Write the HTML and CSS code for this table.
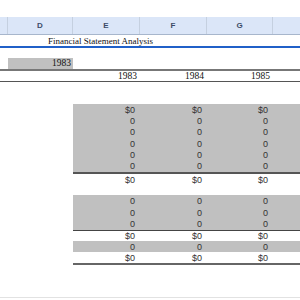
FILE: index.html
```html
<!DOCTYPE html>
<html>
<head>
<meta charset="utf-8">
<link rel="stylesheet" href="styles.css">
</head>
<body>
<div class="sheet">
  <div class="topgap"></div>
  <div class="cols colhead">
    <div class="hc"></div><div class="hc">D</div><div class="hc">E</div><div class="hc">F</div><div class="hc">G</div><div class="hc last"></div>
  </div>
  <div class="title"><span class="title-text">Financial Statement Analysis</span></div>
  <div class="gap10"></div>
  <div class="cols yr1">
    <div></div><div class="yearbox">1983</div>
  </div>
  <div class="cols years">
    <div></div><div></div><div class="yr">1983</div><div class="yr">1984</div><div class="yr">1985</div><div></div>
  </div>
  <div class="gap22"></div>
  <div class="data">
    <div class="block b1">
      <div class="drow"><div class="num">$0</div><div class="num">$0</div><div class="num">$0</div></div>
      <div class="drow"><div class="num">0</div><div class="num">0</div><div class="num">0</div></div>
      <div class="drow"><div class="num">0</div><div class="num">0</div><div class="num">0</div></div>
      <div class="drow"><div class="num">0</div><div class="num">0</div><div class="num">0</div></div>
      <div class="drow"><div class="num">0</div><div class="num">0</div><div class="num">0</div></div>
      <div class="drow"><div class="num">0</div><div class="num">0</div><div class="num">0</div></div>
    </div>
    <div class="drow total"><div class="num">$0</div><div class="num">$0</div><div class="num">$0</div></div>
    <div class="gap10"></div>
    <div class="block b2">
      <div class="drow"><div class="num">0</div><div class="num">0</div><div class="num">0</div></div>
      <div class="drow"><div class="num">0</div><div class="num">0</div><div class="num">0</div></div>
      <div class="drow"><div class="num">0</div><div class="num">0</div><div class="num">0</div></div>
    </div>
    <div class="drow sub"><div class="num">$0</div><div class="num">$0</div><div class="num">$0</div></div>
    <div class="drow shade one"><div class="num">0</div><div class="num">0</div><div class="num">0</div></div>
    <div class="drow final"><div class="num">$0</div><div class="num">$0</div><div class="num">$0</div></div>
  </div>
  <div class="bottomline"></div>
</div>
</body>
</html>
```
FILE: styles.css
```css
html, body {
  margin: 0;
  padding: 0;
  background: #ffffff;
}
.sheet {
  width: 300px;
  height: 300px;
  overflow: hidden;
  position: relative;
}
.topgap { height: 17px; }
.cols {
  display: grid;
  grid-template-columns: 8px 65px 67px 67px 66px 1fr;
}
.colhead {
  height: 17px;
  background: #dbe6f8;
  border-bottom: 1px solid #a7b6cc;
}
.hc {
  border-right: 1px solid #c5d0e0;
  font-family: "Liberation Sans", Arial, sans-serif;
  font-weight: bold;
  font-size: 8px;
  color: #3d4c68;
  text-align: center;
  line-height: 17px;
}
.hc.last { border-right: none; }
.title {
  height: 11px;
  border-bottom: 2px solid #2060c8;
  font-family: "Liberation Serif", "Times New Roman", serif;
  font-size: 9px;
  line-height: 12px;
  color: #111;
  padding-left: 48px;
  white-space: nowrap;
}
.gap10 { height: 10px; }
.gap22 { height: 22px; }
.yr1 {
  height: 11px;
  border-bottom: 2px solid #777;
}
.yearbox {
  background: #c0c0c0;
  text-align: right;
  padding-right: 2px;
  font-family: "Liberation Serif", "Times New Roman", serif;
  font-size: 9.5px;
  line-height: 11px;
  color: #111;
}
.years {
  height: 10px;
  border-bottom: 1px solid #555;
}
.yr {
  text-align: right;
  padding-right: 3px;
  font-family: "Liberation Serif", "Times New Roman", serif;
  font-size: 9.5px;
  line-height: 11px;
  color: #111;
}
.data {
  margin-left: 73px;
}
.block { background: #c0c0c0; }
.b1 {
  height: 68px;
  display: flex;
  flex-direction: column;
  border-bottom: 2px solid #555;
}
.b1 .drow { flex: 1; }
.b2 {
  height: 35px;
  display: flex;
  flex-direction: column;
  border-bottom: 1px solid #444;
}
.b2 .drow { flex: 1; }
.drow {
  display: grid;
  grid-template-columns: 67px 67px 66px 1fr;
  align-items: center;
}
.num {
  text-align: right;
  padding-right: 5px;
  font-family: "Liberation Sans", Arial, sans-serif;
  font-size: 9px;
  color: #333;
  line-height: 10px;
}
.total { height: 11px; }
.sub { height: 10px; }
.shade { background: #c0c0c0; }
.one { height: 11px; }
.final {
  height: 11px;
  border-bottom: 2px solid #666;
}
.bottomline {
  position: absolute;
  left: 0;
  right: 0;
  top: 297px;
  height: 1px;
  background: #e2e2e2;
}
```
